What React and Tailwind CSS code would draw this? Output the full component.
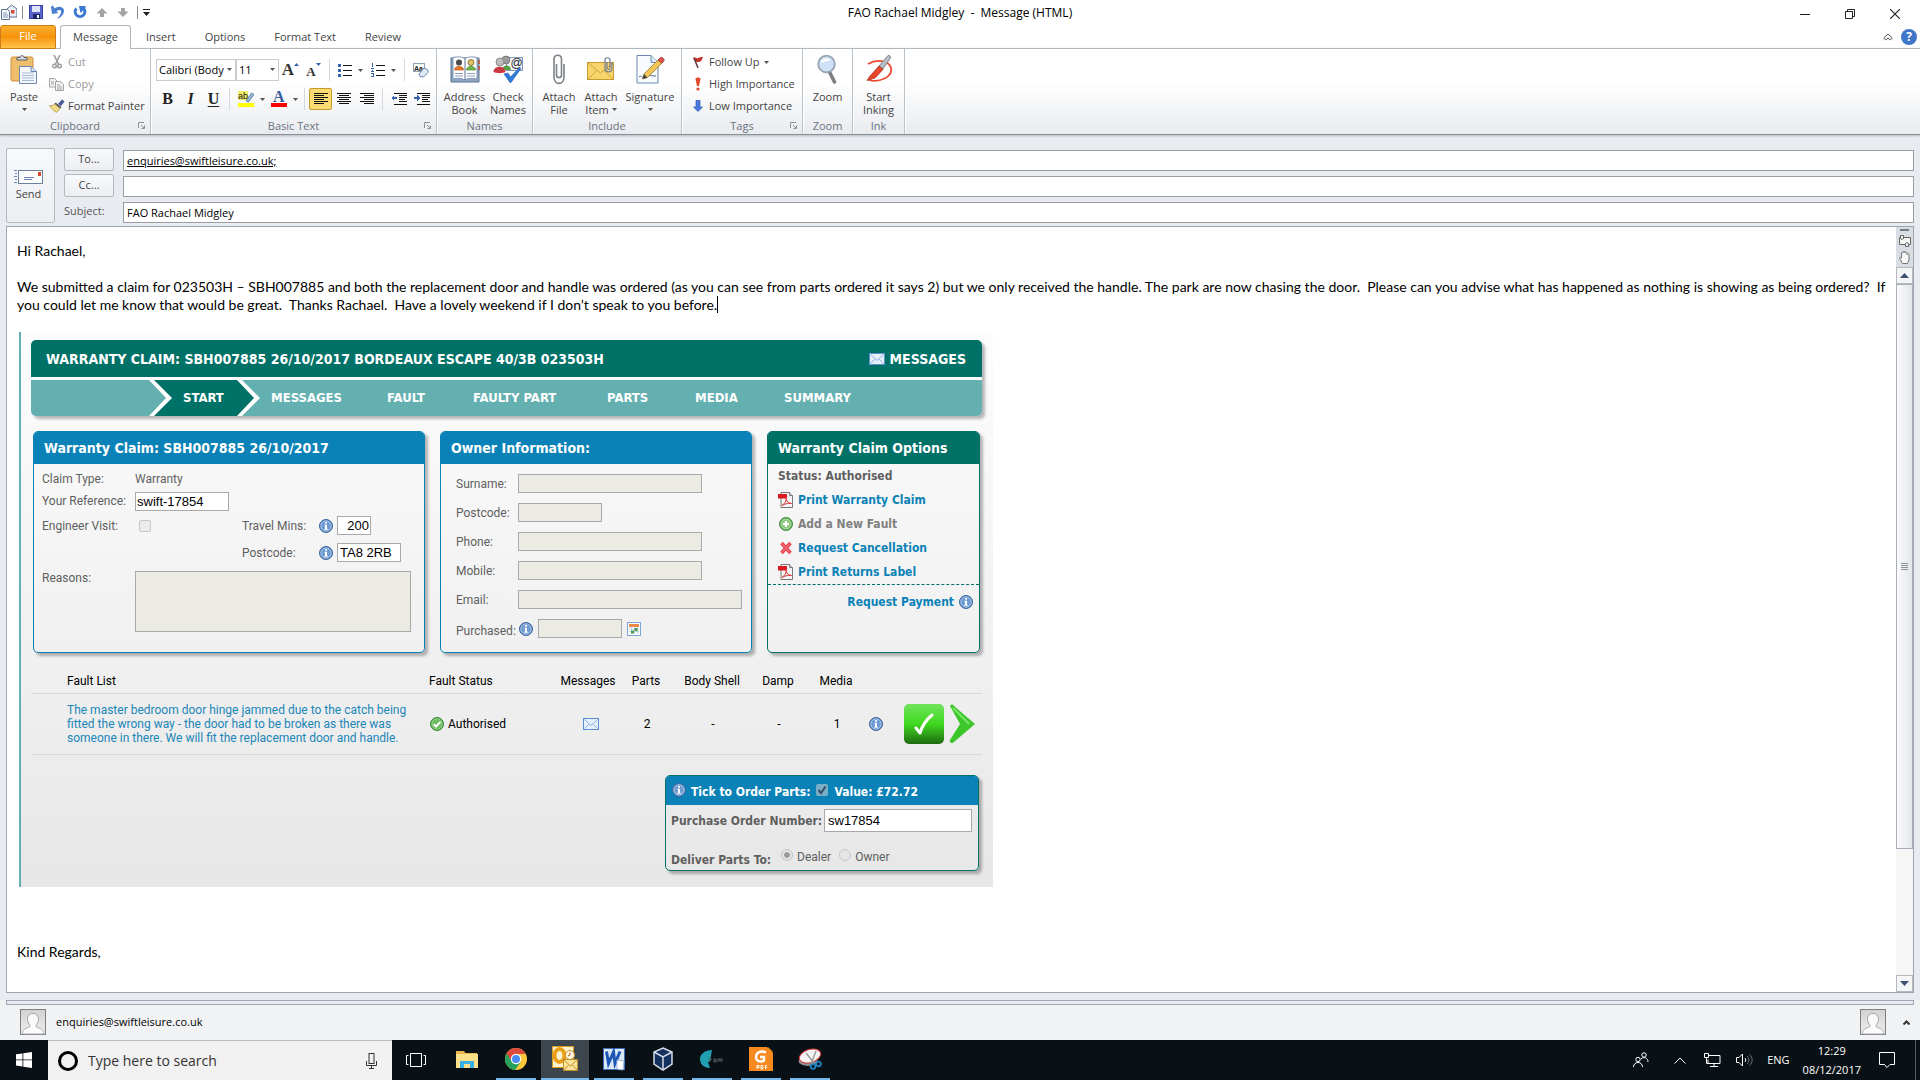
import React from 'react';

const TABS = ['Insert', 'Options', 'Format Text', 'Review'];

const CLAIM_TABS = [
  { label: 'MESSAGES', width: 'w-[116px]' },
  { label: 'FAULT', width: 'w-[86px]' },
  { label: 'FAULTY PART', width: 'w-[134px]' },
  { label: 'PARTS', width: 'w-[88px]' },
  { label: 'MEDIA', width: 'w-[89px]' },
  { label: 'SUMMARY', width: 'w-[90px]' },
];

const OWNER_FIELDS = [
  { id: 'surname', label: 'Surname:', width: 'w-[184px]' },
  { id: 'owner-postcode', label: 'Postcode:', width: 'w-[84px]' },
  { id: 'phone', label: 'Phone:', width: 'w-[184px]' },
  { id: 'mobile', label: 'Mobile:', width: 'w-[184px]' },
  { id: 'email', label: 'Email:', width: 'w-[224px]' },
];

/* ---------- small shared pieces ---------- */

const Caret = ({ className = 'fill-[#555]' }) => (
  <svg width="5" height="3" viewBox="0 0 5 3" className={`shrink-0 ${className}`}>
    <path d="M0 0h5L2.5 3z" />
  </svg>
);

const Lines = ({ rows, children, width = 16 }) => (
  <svg width={width} height="14" viewBox={`0 0 ${width} 14`} shapeRendering="crispEdges">
    {rows.map(([x, y, w]) => (
      <rect key={y} x={x} y={y} width={w} height="1" fill="#111" />
    ))}
    {children}
  </svg>
);

const InfoIcon = () => (
  <svg width="14" height="14" viewBox="0 0 14 14" className="shrink-0">
    <circle cx="7" cy="7" r="6.5" fill="#4f7fbb" stroke="#3c66a0" />
    <circle cx="7" cy="7" r="5.2" fill="#6d9bd1" stroke="#c4d8ee" strokeWidth=".8" />
    <rect x="6.2" y="3" width="1.8" height="1.7" fill="#fff" />
    <path d="M5.4 5.8H8v4h.8v1H5.2v-1H6v-3h-.6z" fill="#fff" />
  </svg>
);

const EnvelopeIcon = () => (
  <svg width="16" height="12" viewBox="0 0 16 12" className="shrink-0">
    <rect x=".5" y=".5" width="15" height="11" fill="#e6f0fc" stroke="#5b8fd0" />
    <path d="M1.5 1.5 8 7.5l6.5-6M1.5 10.5l4.3-4.3M14.5 10.5l-4.3-4.3" fill="none" stroke="#8db4e4" />
  </svg>
);

const PdfIcon = () => (
  <svg width="16" height="16" viewBox="0 0 16 16" className="shrink-0">
    <path d="M3 .5h8.500l3 3v12H3z" fill="#f5f5f5" stroke="#777" />
    <path d="M11.500.5v3h3" fill="#ddd" stroke="#777" />
    <rect x="0" y="2" width="9" height="4.500" fill="#d8191f" />
    <path d="M4 13.500c3-2 4.300-4.500 4-7 .5 3 2.500 4.500 5.500 5-4-.3-7 .4-9.500 2z" fill="none" stroke="#d8373c" />
  </svg>
);

const AddIcon = () => (
  <svg width="14" height="14" viewBox="0 0 14 14" className="shrink-0">
    <circle cx="7" cy="7" r="6.5" fill="#5aa552" stroke="#4a9043" />
    <circle cx="7" cy="7" r="5" fill="#8bc97f" stroke="#c9e8c2" strokeWidth=".7" />
    <path d="M7 4v6M4 7h6" stroke="#fff" strokeWidth="2.2" />
  </svg>
);

const CrossIcon = () => (
  <svg width="14" height="14" viewBox="0 0 14 14" className="shrink-0">
    <path d="M2.5 2 11.5 12M11.5 2 2.5 12" stroke="#e0404a" strokeWidth="3.6" />
    <path d="M2.5 2 11.5 12M11.5 2 2.5 12" stroke="#f0656a" strokeWidth="1.8" />
  </svg>
);

const OkIcon = () => (
  <svg width="14" height="14" viewBox="0 0 14 14" className="shrink-0">
    <circle cx="7" cy="7" r="6.5" fill="#55a84c" stroke="#3f8a3a" />
    <circle cx="7" cy="7" r="5.2" fill="#6fbb62" stroke="#a9dba0" strokeWidth=".7" />
    <path d="m3.8 7.2 2.3 2.3 4.3-4.6" fill="none" stroke="#fff" strokeWidth="2" />
  </svg>
);

const CalendarIcon = () => (
  <svg width="14" height="14" viewBox="0 0 14 14" className="shrink-0">
    <rect x=".5" y=".5" width="13" height="13" fill="#fff" stroke="#7ba6dc" />
    <rect x="2" y="2" width="10" height="3" fill="#f08a4b" />
    <path d="M2 7h10M2 9.5h10M4.5 5v7M7.5 5v7M10.5 5v7" stroke="#a9c6ea" strokeWidth=".7" />
    <rect x="7.5" y="6" width="3" height="3" fill="#4e9c4b" />
    <rect x="4" y="8.5" width="3" height="3" fill="#4e9c4b" />
  </svg>
);

const PersonIcon = () => (
  <svg width="26" height="26" viewBox="0 0 26 26" className="shrink-0">
    <defs>
      <linearGradient id="person" x2="0" y2="1">
        <stop offset="0" stopColor="#d2d2d2" />
        <stop offset="1" stopColor="#efefef" />
      </linearGradient>
    </defs>
    <rect x=".5" y=".5" width="25" height="25" fill="url(#person)" stroke="#7d7f83" />
    <path
      d="M2.500 25c0-4 1-5 6-6.500 1.500-.5 1.800-2 .8-3.200C8 13.500 7.500 12 7.500 10c0-3.500 2-5.500 5.500-5.500s5.500 2 5.500 5.500c0 2-.5 3.500-1.800 5.300-1 1.200-.7 2.700.8 3.200 5 1.500 6 2.500 6 6.500z"
      fill="#fafafa"
      stroke="#a5a8ad"
    />
  </svg>
);

/* ---------- quick access toolbar ---------- */

function TitleBar() {
  return (
    <header className="relative flex h-6 items-center justify-between bg-white">
      <div className="flex items-center gap-[5px] pl-px">
        <svg width="16" height="16" viewBox="0 0 16 16">
          <path d="M5 6 10.500 1 16 5v8H5z" fill="#e8eef6" stroke="#5e7391" />
          <rect x="10" y="6" width="3.500" height="3.500" fill="#d2503b" />
          <path d="M.5 5.500h6l2 2v8h-8z" fill="#f6f9fd" stroke="#5e7391" />
          <path d="M2 9h4M2 11h5M2 13h5" stroke="#7d95b6" />
        </svg>
        <span className="h-[13px] w-px bg-[#8c8c8c]" />
        <button aria-label="Save" className="ml-px">
          <svg width="14" height="14" viewBox="0 0 14 14">
            <rect x=".5" y=".5" width="13" height="13" fill="#5a63c8" stroke="#3a449c" />
            <rect x="3" y="1" width="8" height="6" fill="#dfe5f8" />
            <rect x="4" y="9" width="7" height="5" fill="#20286c" />
            <rect x="8" y="10" width="2" height="3" fill="#fff" />
          </svg>
        </button>
        <button aria-label="Undo" className="ml-[3px]">
          <svg width="14" height="14" viewBox="0 0 14 14">
            <path d="M0 1.500 2 .5l1.500 3C6 1 12.500.5 13 5.500c.2 3.500-2.500 6-5.500 8l-1-.5c2.500-2.500 4-5 3.500-7-.5-1.500-3-1-4.500.5L7.500 8 1 9z" fill="#4a7fd0" />
          </svg>
        </button>
        <button aria-label="Redo" className="ml-[3px]">
          <svg width="14" height="14" viewBox="0 0 14 14">
            <path d="M3.500 3.500a4.800 4.800 0 1 0 7 0" fill="none" stroke="#3a78d2" strokeWidth="3" />
            <path d="M6 1h6.500v2L7.500 8z" fill="#3a78d2" />
          </svg>
        </button>
        <button aria-label="Previous item" className="ml-1">
          <svg width="12" height="11" viewBox="0 0 12 11"><path d="M6 1 11.500 6.500H8V10H4V6.500H.5z" fill="#a3a3a3" /></svg>
        </button>
        <button aria-label="Next item" className="ml-1">
          <svg width="12" height="11" viewBox="0 0 12 11"><path d="M6 10 .5 4.500H4V1h4v3.500h3.500z" fill="#a3a3a3" /></svg>
        </button>
        <span className="ml-[3px] h-[13px] w-px bg-[#8c8c8c]" />
        <button aria-label="Customise toolbar">
          <svg width="7" height="7" viewBox="0 0 7 7"><path d="M0 0h7v1H0zM0 3h7L3.500 7z" fill="#222" /></svg>
        </button>
      </div>
      <h1 className="pointer-events-none absolute inset-x-0 pt-[2px] text-center text-[12px] text-black">
        FAO Rachael Midgley&nbsp; -&nbsp; Message (HTML)
      </h1>
      <div className="flex items-center gap-[35px] pr-5 pt-1">
        <button aria-label="Minimise"><svg width="10" height="10"><path d="M0 5.500h10" stroke="#222" /></svg></button>
        <button aria-label="Restore">
          <svg width="10" height="10" viewBox="0 0 10 10" fill="none" stroke="#222"><path d="M.5 2.500h7v7h-7zM2.500 2.500v-2h7v7h-2" /></svg>
        </button>
        <button aria-label="Close">
          <svg width="10" height="10" viewBox="0 0 10 10" stroke="#222" strokeWidth="1.2"><path d="M0 0l10 10M10 0 0 10" /></svg>
        </button>
      </div>
    </header>
  );
}

function TabRow() {
  return (
    <nav className="relative z-10 -mb-px mt-px flex h-6 items-stretch text-[11px] text-[#444]">
      <button className="w-14 rounded-t-[3px] border border-[#cf7a17] bg-linear-to-b from-[#f9b02a] via-[#f79306] to-[#ffc445] pb-px text-white">
        File
      </button>
      <button className="ml-1 w-[71px] rounded-t-[3px] border border-b-0 border-[#b0b6bd] bg-white">Message</button>
      <div className="flex gap-[29px] pl-[15px]">
        {TABS.map(tab => <button key={tab}>{tab}</button>)}
      </div>
      <div className="ml-auto flex items-center gap-2 pr-[3px]">
        <button aria-label="Minimise ribbon">
          <svg width="10" height="8" viewBox="0 0 10 8" fill="none" stroke="#555"><path d="m.7 5 4.300-4 4.300 4-2 2L5 5 2.700 7z" /></svg>
        </button>
        <button aria-label="Help" className="size-4 rounded-full bg-[#3f76c9] text-[12px] font-bold leading-4 text-white">?</button>
      </div>
    </nav>
  );
}

/* ---------- ribbon ---------- */

function Group({ title, width, launcher, children }) {
  return (
    <section className={`flex h-full flex-col border-r border-[#bcc2ca] shadow-[1px_0_0_#fff] ${width}`}>
      <div className="h-[68px]">{children}</div>
      <div className="relative text-center text-[11px] leading-[17px] text-[#6b7280]">
        {title}
        {launcher && (
          <button aria-label={`${title} options`} className="absolute right-[5px] top-[5px]">
            <svg width="7" height="7" viewBox="0 0 7 7" fill="none" stroke="#8b9097"><path d="M.5 6V.5H6M3 3l3 3M6.500 3.500v3h-3" /></svg>
          </button>
        )}
      </div>
    </section>
  );
}

function BigButton({ icon, width, label, second, caret }) {
  return (
    <button className={`flex flex-col items-center pt-1 text-[11px] leading-[13px] text-[#444] ${width}`}>
      <span className="mb-[5px] flex h-8 items-center justify-center">{icon}</span>
      <span>{label}</span>
      <span className="flex h-[13px] items-center gap-[3px]">
        {second}
        {caret && <Caret />}
      </span>
    </button>
  );
}

function SmallButton({ icon, label, muted, caret }) {
  return (
    <button className={`flex h-[22px] items-center whitespace-nowrap text-[11px] ${muted ? 'text-[#9a9a9a]' : 'text-[#444]'}`}>
      <span className="flex w-[17px] justify-center">{icon}</span>
      <span className="pl-[3px]">{label}</span>
      {caret && <span className="pl-1"><Caret /></span>}
    </button>
  );
}

const ToolButton = ({ label, active, children }) => (
  <button
    aria-label={label}
    className={`flex h-[22px] w-[23px] items-center justify-center ${active ? 'rounded-[2px] border border-[#c29b29] bg-[#fbdb72]' : ''}`}
  >
    {children}
  </button>
);

const SplitButton = ({ label, children }) => (
  <button aria-label={label} className="flex h-[22px] w-[33px] items-center gap-[6px] pl-1">
    {children}
    <Caret />
  </button>
);

const Divider = () => <span className="mx-1 h-[22px] w-px bg-[#d5d8dc]" />;

const RibbonSelect = ({ label, value, width }) => (
  <span className={`relative flex ${width}`}>
    <select
      aria-label={label}
      defaultValue={value}
      className="h-[22px] w-full appearance-none border border-[#c9ccd1] bg-white pl-[2px] text-[11px] text-black"
    >
      <option>{value}</option>
    </select>
    <span className="pointer-events-none absolute right-1 top-[9px] flex"><Caret /></span>
  </span>
);

const PasteIcon = () => (
  <svg width="28" height="31" viewBox="0 0 28 31">
    <rect x="1" y="3" width="22" height="24" rx="1.5" fill="#efbe6a" stroke="#c98f3a" />
    <path d="M7 6V3.500h3C10 1 14 1 14 3.500h3V6z" fill="#d9dce2" stroke="#555b66" />
    <path d="M9.500 12.500H21l5.500 5v12h-17z" fill="#f4f8fe" stroke="#6b86ad" />
    <path d="M21 12.500v5h5.500" fill="#d3e0f2" stroke="#6b86ad" />
    <path d="M12 19h12M12 21.500h12M12 24h12M12 26.500h12" stroke="#a4b7d3" />
  </svg>
);

const CutIcon = () => (
  <svg width="10" height="14" viewBox="0 0 10 14" fill="none" stroke="#9b9b9b">
    <path d="M2 0l4.500 9M8 0 3.500 9" strokeWidth="1.6" />
    <circle cx="2.5" cy="11" r="1.8" strokeWidth="1.4" />
    <circle cx="7.5" cy="11" r="1.8" strokeWidth="1.4" />
  </svg>
);

const CopyIcon = () => (
  <svg width="15" height="13" viewBox="0 0 15 13" fill="#f2f2f2" stroke="#a3a3a3">
    <path d="M.5.5h5l2.500 2.500v6H.5z" />
    <path d="M6.500 3.500h5l3 3v6h-8z" />
    <path d="M2 4h3M2 6h3M8 7h3M8 9h5M8 11h5" />
  </svg>
);

const PainterIcon = () => (
  <svg width="16" height="14" viewBox="0 0 16 14">
    <path d="m9 5 4-4.500 2.500 2L12 7z" fill="#46559b" />
    <path d="m6.500 3.500 6 4.500-1.500 1.500L5.500 5z" fill="#555" />
    <path d="M5.500 5 11 9.500 7.500 13.500C5 12 2.500 10 .5 6.500 2.500 7 4 6.500 5.500 5z" fill="#f1dc8a" stroke="#a98e3c" strokeWidth=".7" />
  </svg>
);

const AddressBookIcon = () => (
  <svg width="30" height="27" viewBox="0 0 30 27">
    <path d="M1 2h28v24H1z" fill="#8fa6c4" stroke="#59718f" />
    <path d="M3 1.500c4-1 9-1 12 1 3-2 8-2 12-1V23c-4-1-9-1-12 1-3-2-8-2-12-1z" fill="#fff" stroke="#8297b5" />
    <path d="M15 2.500V24" stroke="#59718f" />
    <circle cx="9" cy="6.500" r="3" fill="#4a4a4a" />
    <path d="M4.500 14c0-5 9-5 9 0z" fill="#e6762a" stroke="#b2500f" strokeWidth=".6" />
    <circle cx="21" cy="6.500" r="3" fill="#e3c265" stroke="#5c4a1a" strokeWidth=".7" />
    <path d="M16.500 14c0-5 9-5 9 0z" fill="#6fb64c" stroke="#3f8224" strokeWidth=".6" />
    <path d="M5 17.500h8M5 20h8M17 17.500h8M17 20h8" stroke="#8aa0bf" />
    <path d="M29 4v4M29 10v4" stroke="#c84a32" strokeWidth="1.5" />
  </svg>
);

const CheckNamesIcon = () => (
  <svg width="31" height="28" viewBox="0 0 31 28">
    <rect x="13.500" y="2.500" width="16" height="13" fill="#f4f8fd" stroke="#7f98ba" />
    <circle cx="13" cy="5" r="4" fill="#9b9b9b" stroke="#666" strokeWidth=".7" />
    <path d="M9 15c0-6 9-6 9 0z" fill="#55a043" />
    <circle cx="7" cy="7" r="4" fill="#bdbdbd" stroke="#707070" strokeWidth=".7" />
    <path d="M.5 17c0-7 12-7 12 0-3 1.500-9 1.500-12 0z" fill="#c93a44" />
    <text x="17.500" y="12" fontSize="12" fontFamily="Liberation Sans" fill="#222">@</text>
    <path d="m11 19 4-1 2.500 4L26 13l2 .5-10 14h-1z" fill="#2f7bdc" stroke="#1c58ac" strokeWidth=".6" />
  </svg>
);

const ClipIcon = () => (
  <svg width="12" height="31" viewBox="0 0 12 31" fill="none" stroke="#7d8288" strokeWidth="1.6">
    <path d="M3.500 10v11c0 3.500 5 3.500 5 0V5c0-5-7.500-5-7.500 0v18c0 8.500 10 8.500 10 0V10" />
  </svg>
);

const AttachItemIcon = () => (
  <svg width="29" height="26" viewBox="0 0 29 26">
    <rect x=".5" y="6.500" width="26" height="17" fill="#f8d56a" stroke="#c79a32" />
    <path d="m1 7 12.500 10L26 7M1 23l9-8.500M26 23l-9-8.500" fill="none" stroke="#d0a440" />
    <path d="M20 6v6c0 2 3 2 3 0V4c0-3-5-3-5 0v8.500c0 4.500 7 4.500 7 0V6" fill="none" stroke="#6d7f99" strokeWidth="1.2" />
  </svg>
);

const SignatureIcon = () => (
  <svg width="29" height="30" viewBox="0 0 29 30">
    <path d="M1 1.500h14l7 7V29H1z" fill="#f8fbff" stroke="#6b86ad" />
    <path d="M15 1.500v7h7" fill="#dbe7f7" stroke="#6b86ad" />
    <path d="M3 23c3-3 3 3 6 0s4-1 11-1" fill="none" stroke="#54698c" />
    <path d="m8 20 15-15 3.500 3.500-15 15L6.500 25z" fill="#f3c655" stroke="#9a7a2a" strokeWidth=".8" />
    <path d="m22 6 2.500-2.500c1.500-1 4.500 2 3.500 3.500L25.500 9.500z" fill="#d9534f" stroke="#8b3a36" strokeWidth=".7" />
    <path d="m8 20-1.500 5 5-1.500z" fill="#444" />
  </svg>
);

const ZoomIcon = () => (
  <svg width="21" height="31" viewBox="0 0 21 31">
    <path d="m12 17 5.500 11" stroke="#7f7f7f" strokeWidth="3.6" strokeLinecap="round" />
    <circle cx="9.500" cy="10" r="8.300" fill="#cfe1f6" stroke="#98a3b1" strokeWidth="1.8" />
    <path d="M4 9c0-5 8-6 10-2-4-1-6 1-10 2z" fill="#fff" />
  </svg>
);

const InkIcon = () => (
  <svg width="28" height="30" viewBox="0 0 28 30">
    <path d="M3 10c8-5 21-4 23 4 2 9-12 15-22 12" fill="none" stroke="#ef4b32" strokeWidth="1.8" />
    <path d="M14 12 23 1.500c1.500-.5 3 1 2.500 2.500L18 15z" fill="#b9bcc1" stroke="#6f7276" strokeWidth=".8" />
    <path d="m14 12 4 3.500-8 8.500-6 2-2 .5 3-4.500z" fill="#e8432b" stroke="#a32a17" strokeWidth=".7" />
  </svg>
);

const INDENT_ROWS = [[3, 1, 13], [8, 3, 8], [8, 5, 8], [8, 7, 6], [8, 9, 8], [3, 12, 13]];

function Ribbon() {
  return (
    <div className="flex h-[87px] shrink-0 border-y border-t-[#b0b6bd] border-b-[#8b9097] bg-linear-to-b from-white from-40% to-[#e9ebef] shadow-[0_1px_2px_#b5bac2]">
      <Group title="Clipboard" width="w-[151px]" launcher>
        <div className="flex">
          <BigButton icon={<PasteIcon />} width="w-12" label="Paste" caret />
          <div className="flex flex-col items-start pt-[2px]">
            <SmallButton icon={<CutIcon />} label="Cut" muted />
            <SmallButton icon={<CopyIcon />} label="Copy" muted />
            <SmallButton icon={<PainterIcon />} label="Format Painter" />
          </div>
        </div>
      </Group>

      <Group title="Basic Text" width="w-[286px]" launcher>
        <div className="flex flex-col gap-[7px] pl-[5px] pt-[10px]">
          <div className="flex h-[22px] items-center">
            <RibbonSelect label="Font" value="Calibri (Body" width="w-20" />
            <RibbonSelect label="Font size" value="11" width="w-[43px]" />
            <ToolButton label="Grow font">
              <span className="font-['Liberation_Serif'] text-[17px] font-bold text-[#333]">A</span>
              <svg width="5" height="3" className="mb-3"><path d="M0 3h5L2.500 0z" fill="#3763ae" /></svg>
            </ToolButton>
            <ToolButton label="Shrink font">
              <span className="pt-1 font-['Liberation_Serif'] text-[13px] font-bold text-[#333]">A</span>
              <Caret className="mb-3 fill-[#3763ae]" />
            </ToolButton>
            <Divider />
            <SplitButton label="Bullets">
              <Lines rows={[[5, 2, 9], [5, 7, 9], [5, 12, 9]]} width={14}>
                <path d="M0 1h3v3H0zM0 6h3v3H0zM0 11h3v3H0z" fill="#3763ae" />
              </Lines>
            </SplitButton>
            <SplitButton label="Numbering">
              <Lines rows={[[5, 2, 9], [5, 7, 9], [5, 12, 9]]} width={14}>
                <path d="M1 0h1v4H1zM0 5h3v1H0zM1 7h1v1H1zM0 8h3v1H0zM0 10h3v1H0zM2 11h1v3H0v-1h2z" fill="#3763ae" />
              </Lines>
            </SplitButton>
            <Divider />
            <ToolButton label="Clear formatting">
              <svg width="16" height="16" viewBox="0 0 16 16">
                <rect x=".5" y="1.500" width="11" height="8" fill="#fff" stroke="#8da0ba" />
                <text x="1" y="8.500" fontSize="7" fontFamily="Liberation Sans" fontWeight="bold" fill="#222">Aa</text>
                <path d="m6 12 5-6 4 2v2.500L10.500 15 7 14.500z" fill="#dfe8f6" stroke="#7388ae" />
              </svg>
            </ToolButton>
          </div>

          <div className="flex h-[22px] items-center font-['Liberation_Serif'] text-[16px] text-[#222]">
            <ToolButton label="Bold"><b>B</b></ToolButton>
            <ToolButton label="Italic"><i className="font-bold">I</i></ToolButton>
            <ToolButton label="Underline"><b className="underline underline-offset-2">U</b></ToolButton>
            <Divider />
            <SplitButton label="Highlight colour">
              <svg width="16" height="16" viewBox="0 0 16 16">
                <rect width="10" height="9" fill="#f3ee6a" />
                <text x="0" y="8" fontSize="9" fontFamily="Liberation Sans" fill="#111">ab</text>
                <path d="m8 10 5.500-8L16 3.500 10.500 11z" fill="#9ab4da" stroke="#4b658f" strokeWidth=".7" />
                <rect y="12" width="16" height="4" fill="#ff0" />
              </svg>
            </SplitButton>
            <SplitButton label="Font colour">
              <svg width="16" height="16" viewBox="0 0 16 16">
                <text x="2" y="11" fontSize="16" fontFamily="Liberation Serif" fontWeight="bold" fill="#3a5c9c">A</text>
                <rect y="12" width="16" height="4" fill="#f00" />
              </svg>
            </SplitButton>
            <Divider />
            <ToolButton label="Align left" active>
              <Lines rows={[[0, 1, 14], [0, 3, 10], [0, 5, 14], [0, 7, 10], [0, 9, 14], [0, 11, 10]]} width={14} />
            </ToolButton>
            <ToolButton label="Centre">
              <Lines rows={[[0, 1, 14], [2, 3, 10], [0, 5, 14], [2, 7, 10], [0, 9, 14], [2, 11, 10]]} width={14} />
            </ToolButton>
            <ToolButton label="Align right">
              <Lines rows={[[0, 1, 14], [4, 3, 10], [0, 5, 14], [4, 7, 10], [0, 9, 14], [4, 11, 10]]} width={14} />
            </ToolButton>
            <Divider />
            <ToolButton label="Decrease indent">
              <Lines rows={INDENT_ROWS}><path d="M0 6l3-3v2h3v2H3v2z" fill="#3763ae" /></Lines>
            </ToolButton>
            <ToolButton label="Increase indent">
              <Lines rows={INDENT_ROWS}><path d="M6 6 3 3v2H0v2h3v2z" fill="#3763ae" /></Lines>
            </ToolButton>
          </div>
        </div>
      </Group>

      <Group title="Names" width="w-24">
        <div className="flex pl-[5px]">
          <BigButton icon={<AddressBookIcon />} width="w-[45px]" label="Address" second="Book" />
          <BigButton icon={<CheckNamesIcon />} width="w-[42px]" label="Check" second="Names" />
        </div>
      </Group>

      <Group title="Include" width="w-[149px]">
        <div className="flex pl-[6px]">
          <BigButton icon={<ClipIcon />} width="w-10" label="Attach" second="File" />
          <BigButton icon={<AttachItemIcon />} width="w-[44px]" label="Attach" second="Item" caret />
          <BigButton icon={<SignatureIcon />} width="w-[54px]" label="Signature" caret />
        </div>
      </Group>

      <Group title="Tags" width="w-[121px]" launcher>
        <div className="flex flex-col items-start pl-[7px] pt-[2px]">
          <SmallButton
            label="Follow Up"
            caret
            icon={<svg width="10" height="12" viewBox="0 0 10 12"><path d="M0 2c2-2 3 1 5 0s3-1 5-1c-1 3-2 5-5 5H3z" fill="#c5352b" /><path d="m1 2 4 10" stroke="#5b3b3b" strokeWidth="1.5" /></svg>}
          />
          <SmallButton
            label="High Importance"
            icon={<svg width="6" height="14" viewBox="0 0 6 14"><path d="M.5 2C.5 0 5.500 0 5.500 2L4 9H2z" fill="#e04a2a" /><circle cx="3" cy="12" r="1.6" fill="#e04a2a" /></svg>}
          />
          <SmallButton
            label="Low Importance"
            icon={<svg width="10" height="12" viewBox="0 0 10 12"><path d="M3 .5h4V7h2.500L5 11.500.5 7H3z" fill="#4a7ae0" stroke="#3058b0" strokeWidth=".7" /></svg>}
          />
        </div>
      </Group>

      <Group title="Zoom" width="w-[50px]">
        <BigButton icon={<ZoomIcon />} width="w-full" label="Zoom" />
      </Group>
      <Group title="Ink" width="w-[52px]">
        <BigButton icon={<InkIcon />} width="w-full" label="Start" second="Inking" />
      </Group>
    </div>
  );
}

/* ---------- message header ---------- */

const headerButton = 'border border-[#b4b8bf] rounded-[2px] bg-linear-to-b from-[#f8f9fb] to-[#eceef2] text-[11px] text-[#444]';
const headerInput = 'h-[21px] min-w-0 flex-1 self-end border border-[#9a9da2] bg-white px-[3px] pb-px text-[11px] text-black outline-none';

function MessageHeader() {
  return (
    <div className="flex shrink-0 gap-[9px] px-[6px] pt-[13px]">
      <button className={`flex w-[49px] flex-col items-center justify-center gap-px pr-1 pt-[2px] ${headerButton}`}>
        <svg width="30" height="15" viewBox="0 0 30 15">
          <path d="M0 .5h3M1 3.500h2M0 6.500h3M1 9.500h2M0 12.500h3" stroke="#6c86b5" />
          <rect x="4.500" y=".5" width="24" height="13" fill="#fbfcfe" stroke="#6b7f9e" />
          <rect x="24" y="2" width="3" height="4" fill="#d2452e" />
          <path d="M10 7.500h10M10 9.500h8" stroke="#6c86b5" />
        </svg>
        Send
      </button>
      <div className="flex flex-1 flex-col gap-[3px]">
        <div className="flex h-[23px] gap-[9px]">
          <button className={`w-[50px] ${headerButton}`}>To...</button>
          <input aria-label="To" className={`underline ${headerInput}`} defaultValue="enquiries@swiftleisure.co.uk;" />
        </div>
        <div className="flex h-[23px] gap-[9px]">
          <button className={`w-[50px] ${headerButton}`}>Cc...</button>
          <input aria-label="Cc" className={headerInput} />
        </div>
        <div className="flex h-[23px] gap-[9px]">
          <label htmlFor="subject" className="w-[50px] self-center text-[11px] text-[#555]">Subject:</label>
          <input id="subject" className={headerInput} defaultValue="FAO Rachael Midgley" />
        </div>
      </div>
    </div>
  );
}

/* ---------- warranty claim page ---------- */

const field = 'border border-[#a9a9a9] font-[Liberation_Sans] text-[13px] text-black h-[19px]';
const boldFont = "font-['DejaVu_Sans_Condensed','DejaVu_Sans',sans-serif] font-bold";

function Panel({ title, tone, children }) {
  const blue = tone === 'blue';
  return (
    <section className={`overflow-hidden rounded-[5px] border shadow-[3px_3px_3px_rgba(0,0,0,0.28)] ${blue ? 'border-[#0b82b7]' : 'border-[#007167]'}`}>
      <h3 className={`h-8 pl-[10px] text-[14px] leading-8 text-white ${boldFont} ${blue ? 'bg-[#0b82b7]' : 'bg-[#007167]'}`}>{title}</h3>
      {children}
    </section>
  );
}

function ClaimPanel() {
  return (
    <Panel title="Warranty Claim: SBH007885 26/10/2017" tone="blue">
      <div className="pl-2 pt-1">
        <div className="flex h-[22px] items-center">
          <span className="w-[93px]">Claim Type:</span>
          <span>Warranty</span>
        </div>
        <div className="flex h-[22px] items-center">
          <label htmlFor="reference" className="w-[93px]">Your Reference:</label>
          <input id="reference" defaultValue="swift-17854" className={`w-[94px] bg-white px-px ${field}`} />
        </div>
        <div className="flex h-[27px] items-center">
          <label htmlFor="engineer" className="w-[93px]">Engineer Visit:</label>
          <span className="flex w-[107px] pl-1">
            <input id="engineer" type="checkbox" disabled className="size-3 appearance-none rounded-[2px] border border-[#c6c6c6] bg-[#ececec]" />
          </span>
          <label htmlFor="travel" className="w-[77px]">Travel Mins:</label>
          <InfoIcon />
          <input id="travel" defaultValue="200" className={`ml-1 w-[34px] bg-white px-px text-right ${field}`} />
        </div>
        <div className="flex h-[27px] items-center pl-[200px]">
          <label htmlFor="claim-postcode" className="w-[77px]">Postcode:</label>
          <InfoIcon />
          <input id="claim-postcode" defaultValue="TA8 2RB" className={`ml-1 w-16 bg-white px-[2px] ${field}`} />
        </div>
        <div className="flex pt-[5px]">
          <label htmlFor="reasons" className="w-[93px]">Reasons:</label>
          <textarea id="reasons" disabled className="h-[61px] w-[276px] resize-none border border-[#a9a9a9] bg-[#ebebe4]" />
        </div>
      </div>
    </Panel>
  );
}

function OwnerPanel() {
  return (
    <Panel title="Owner Information:" tone="blue">
      <div className="pb-[9px] pl-[15px] pt-[5px]">
        {OWNER_FIELDS.map(({ id, label, width }) => (
          <div key={id} className="flex h-[29px] items-center">
            <label htmlFor={id} className="w-[62px]">{label}</label>
            <input id={id} disabled className={`${width} bg-[#ebebe4] ${field}`} />
          </div>
        ))}
        <div className="flex h-[29px] items-center">
          <label htmlFor="purchased" className="w-[62px] whitespace-nowrap pt-1">Purchased:</label>
          <span className="ml-px"><InfoIcon /></span>
          <input id="purchased" disabled className={`ml-[5px] mr-[5px] w-[84px] bg-[#ebebe4] ${field}`} />
          <CalendarIcon />
        </div>
      </div>
    </Panel>
  );
}

const OptionLink = ({ icon, label, muted }) => (
  <a href="#" className={`flex h-6 items-center gap-1 pl-[10px] ${boldFont} ${muted ? 'text-[#808080]' : 'text-[#0b82b7]'}`}>
    <span className="flex w-4 justify-center">{icon}</span>
    {label}
  </a>
);

function OptionsPanel() {
  return (
    <Panel title="Warranty Claim Options" tone="green">
      <p className={`h-6 pl-[10px] leading-6 ${boldFont}`}>Status: Authorised</p>
      <OptionLink icon={<PdfIcon />} label="Print Warranty Claim" />
      <OptionLink icon={<AddIcon />} label="Add a New Fault" muted />
      <OptionLink icon={<CrossIcon />} label="Request Cancellation" />
      <OptionLink icon={<PdfIcon />} label="Print Returns Label" />
      <div className="flex items-center justify-end gap-[5px] border-t border-dashed border-[#007167] pr-[6px] pt-[10px]">
        <a href="#" className={`text-[#0b82b7] ${boldFont}`}>Request Payment</a>
        <InfoIcon />
      </div>
    </Panel>
  );
}

function FaultTable() {
  return (
    <table className="mt-[15px] w-full table-fixed border-collapse text-black">
      <colgroup>
        <col />
        <col className="w-[126px]" />
        <col className="w-[66px]" />
        <col className="w-[50px]" />
        <col className="w-[82px]" />
        <col className="w-[50px]" />
        <col className="w-[66px]" />
        <col className="w-[113px]" />
      </colgroup>
      <thead>
        <tr className="h-[25px] border-b border-[#d9d9d9] [&>th]:whitespace-nowrap [&>th]:pt-[2px] [&>th]:font-normal">
          <th className="pl-9 text-left">Fault List</th>
          <th className="text-left">Fault Status</th>
          <th>Messages</th>
          <th>Parts</th>
          <th>Body Shell</th>
          <th>Damp</th>
          <th>Media</th>
          <th aria-label="Actions" />
        </tr>
      </thead>
      <tbody>
        <tr className="h-[61px] border-b border-[#d9d9d9] text-center">
          <td className="pl-9 text-left">
            <a href="#" className="block leading-[14px] text-[#1b86b8]">
              The master bedroom door hinge jammed due to the catch being<br />
              fitted the wrong way - the door had to be broken as there was<br />
              someone in there. We will fit the replacement door and handle.
            </a>
          </td>
          <td>
            <span className="flex items-center gap-1 pl-px"><OkIcon />Authorised</span>
          </td>
          <td><span className="flex justify-center pl-[6px]"><EnvelopeIcon /></span></td>
          <td className="pl-[2px]">2</td>
          <td className="pl-[2px]">-</td>
          <td className="pl-[2px]">-</td>
          <td className="pl-[2px]">1</td>
          <td>
            <span className="flex items-center">
              <InfoIcon />
              <svg width="40" height="40" viewBox="0 0 40 40" className="ml-[21px] shrink-0">
                <defs>
                  <linearGradient id="tick" x2="0" y2="1">
                    <stop offset="0" stopColor="#6fe35b" />
                    <stop offset=".5" stopColor="#3fd820" />
                    <stop offset="1" stopColor="#1d6a10" />
                  </linearGradient>
                </defs>
                <rect width="40" height="40" rx="5" fill="url(#tick)" />
                <path d="m12 24 4 5c2-7 6-13 12-18" fill="none" stroke="#fff" strokeWidth="3" strokeLinecap="round" strokeLinejoin="round" />
              </svg>
              <svg width="27" height="40" viewBox="0 0 27 40" className="ml-[5px] shrink-0">
                <path d="M1 2c1-2 3-2 4 0l21 18L5 38c-2 2-5 1-4-2l10-16z" fill="#3dc62a" />
                <path d="m4 4 16 16" stroke="#7be56b" strokeWidth="2" />
              </svg>
            </span>
          </td>
        </tr>
      </tbody>
    </table>
  );
}

function OrderPanel() {
  return (
    <section className={`ml-auto mr-[3px] mt-5 w-[314px] overflow-hidden rounded-[5px] border border-[#007167] shadow-[3px_3px_3px_rgba(0,0,0,0.28)] ${boldFont}`}>
      <div className="flex h-[29px] items-center bg-[#0b82b7] pl-[6px] pt-1 text-white">
        <span className="pb-1"><InfoIcon /></span>
        <label htmlFor="order" className="pl-[5px]">Tick to Order Parts:</label>
        <span className="relative mx-[6px] mb-1 size-3">
          <input id="order" type="checkbox" disabled defaultChecked className="block size-3 appearance-none rounded-[2px] bg-[#79aec8]" />
          <svg viewBox="0 0 12 12" className="pointer-events-none absolute inset-0"><path d="m2.500 6 2.500 3L9.500 2.500" fill="none" stroke="#33505e" strokeWidth="2" /></svg>
        </span>
        <span>Value: £72.72</span>
      </div>
      <div className="flex h-8 items-center justify-between pl-[5px] pr-[6px]">
        <label htmlFor="po-number">Purchase Order Number:</label>
        <input id="po-number" defaultValue="sw17854" className="h-[23px] w-[148px] border border-[#a9a9a9] bg-white px-[3px] font-[Liberation_Sans] text-[13px] font-normal text-black" />
      </div>
      <fieldset className="flex h-[33px] items-end pb-[3px] pl-[5px]">
        <span className="w-[110px]">Deliver Parts To:</span>
        <span className="flex items-center gap-1 pb-[2px] font-[Roboto] font-normal">
          <input id="dealer" type="radio" name="deliver" disabled defaultChecked className="mb-1 size-3 appearance-none rounded-full border border-[#c2c2c2] bg-[radial-gradient(#9a9a9a_35%,#e4e4e4_45%)]" />
          <label htmlFor="dealer">Dealer</label>
          <input id="owner" type="radio" name="deliver" disabled className="mb-1 ml-1 size-3 appearance-none rounded-full border border-[#c8c8c8] bg-[#e6e6e6]" />
          <label htmlFor="owner">Owner</label>
        </span>
      </fieldset>
    </section>
  );
}

function WarrantyClaim() {
  return (
    <div className="ml-[2px] w-full max-w-[974px] border-l-2 border-[#64b0b1] bg-linear-to-b from-[#fdfdfd] to-[#e7e7e7] pb-4 pl-[10px] pr-[11px] pt-2 font-[Roboto,sans-serif] text-[12px] leading-[14px] text-[#5f5f5f]">
      <div className={`overflow-hidden rounded-[5px] text-white shadow-[3px_3px_3px_rgba(0,0,0,0.28)] ${boldFont}`}>
        <div className="flex h-[37px] items-center justify-between bg-[#007167] pl-[15px] pr-4 text-[14px]">
          <h2>WARRANTY CLAIM: SBH007885 26/10/2017 BORDEAUX ESCAPE 40/3B 023503H</h2>
          <a href="#" className="flex items-center gap-[5px]"><EnvelopeIcon />MESSAGES</a>
        </div>
        <nav className="flex h-[39px] border-t-[3px] border-white bg-[#64b0b1] pl-[118px] text-[13px] leading-[36px]">
          <svg width="23" height="36" viewBox="0 0 23 36">
            <path d="M3 0h20v36H3l18-18z" fill="#007167" />
            <path d="M0 0h5l18 18L5 36H0l17-18z" fill="#fff" />
          </svg>
          <a href="#" className="w-[65px] bg-[#007167] pl-[11px]">START</a>
          <svg width="23" height="36" viewBox="0 0 23 36">
            <path d="M0 0h3l17 18L3 36H0z" fill="#007167" />
            <path d="M0 0h5l18 18L5 36H0l17-18z" fill="#fff" />
          </svg>
          <div className="flex pl-[11px]">
            {CLAIM_TABS.map(({ label, width }) => (
              <a key={label} href="#" className={`whitespace-nowrap ${width}`}>{label}</a>
            ))}
          </div>
        </nav>
      </div>
      <div className="mt-[15px] grid grid-cols-[392fr_312fr_213fr] gap-[15px] px-[2px]">
        <ClaimPanel />
        <OwnerPanel />
        <OptionsPanel />
      </div>
      <FaultTable />
      <OrderPanel />
    </div>
  );
}

/* ---------- message body ---------- */

function ScrollBar() {
  const arrow = 'flex h-[17px] w-full items-center justify-center border border-[#b4b8bf] bg-[#f4f5f7]';
  return (
    <div className="flex w-[17px] shrink-0 flex-col bg-[#f6f6f7]">
      <div className="flex h-10 flex-col items-center gap-1 bg-[#d9dee5] pt-[2px]">
        <span className="h-[2px] w-[9px] bg-[#777c84]" />
        <svg width="12" height="12" viewBox="0 0 12 12" fill="#f4f4f4" stroke="#666"><path d="M.5 2.500h11v7H.5z" /><path d="M1.500.5h3v3l-1.500 1-1.500-1zM6.500 11.500h3v-3l-1.500-1-1.500 1z" /></svg>
        <svg width="12" height="13" viewBox="0 0 12 13" fill="#f7f7f7" stroke="#777"><path d="M3.500 12.500 1 8C0 6 1.500 6 2.500 7V2c0-1 1.500-1 1.500 0V1c0-1 2-1 2 0v1c0-1.500 2-1 2 0v1.500c0-1 2-1 2 0V9l-1.500 3.500z" /></svg>
      </div>
      <button aria-label="Scroll up" className={arrow}><svg width="9" height="5"><path d="M0 5h9L4.500 0z" fill="#3f4f73" /></svg></button>
      <div className="flex flex-[565] flex-col items-center justify-center gap-px border border-[#a9aeb8] bg-linear-to-r from-[#fbfbfc] to-[#e4e6ea]">
        {[0, 1, 2, 3].map(n => <span key={n} className="h-px w-[7px] bg-[#8b909b]" />)}
      </div>
      <div className="flex-[126]" />
      <button aria-label="Scroll down" className={arrow}><svg width="9" height="5"><path d="M0 0h9L4.500 5z" fill="#3f4f73" /></svg></button>
    </div>
  );
}

function MessageBody() {
  return (
    <main className="mx-[6px] mt-[3px] flex min-h-0 flex-1 border border-[#9ea5b3] bg-white">
      <div className="min-w-0 flex-1 overflow-hidden pl-[10px] pt-[15px] font-[Lato,sans-serif] text-[14px] leading-[18px] text-black">
        <p>Hi Rachael,</p>
        <p className="py-[18px]">
          We submitted a claim for 023503H – SBH007885 and both the replacement door and handle was ordered (as you can see from parts ordered it says 2) but we only received the handle. The park are now chasing the door.&nbsp; Please can you advise what has happened as nothing is showing as being ordered?&nbsp; If<br />
          you could let me know that would be great.&nbsp; Thanks Rachael.&nbsp; Have a lovely weekend if I don’t speak to you <span className="border-r border-black">before.</span>
        </p>
        <WarrantyClaim />
        <p className="pt-14">Kind Regards,</p>
      </div>
      <ScrollBar />
    </main>
  );
}

function PeoplePane() {
  return (
    <footer className="mt-[7px] shrink-0 bg-[#f1f2f4]">
      <div className="mx-[6px] h-[5px] border border-[#9ea5b3] bg-[#e8ebf0]" />
      <div className="flex h-[35px] items-center gap-[10px] pb-px pl-5 pr-[10px] text-[11px] text-black">
        <PersonIcon />
        <span>enquiries@swiftleisure.co.uk</span>
        <span className="ml-auto"><PersonIcon /></span>
        <button aria-label="Expand people pane" className="pl-[7px]">
          <svg width="7" height="5" viewBox="0 0 7 5" fill="none" stroke="#333" strokeWidth="2"><path d="m.5 4.500 3-3 3 3" /></svg>
        </button>
      </div>
    </footer>
  );
}

/* ---------- windows taskbar ---------- */

const ExplorerIcon = () => (
  <svg width="22" height="19" viewBox="0 0 22 19">
    <path d="M0 1h8l1.500 2H21v15H0z" fill="#e8b64c" />
    <path d="M0 4h22v14H0z" fill="#fde08a" />
    <path d="M4 18v-7h14v7h-4v-4H8v4z" fill="#38b0e6" />
  </svg>
);

const ChromeIcon = () => (
  <svg width="22" height="22" viewBox="0 0 22 22">
    <circle cx="11" cy="11" r="11" fill="#fdc83a" />
    <path d="M11 11 1.500 5.500A11 11 0 0 0 10 22l5.800-8.300z" fill="#25a15b" />
    <path d="M11 6h9.800A11 11 0 0 0 1.500 5.500L6.500 13z" fill="#dc4a3e" />
    <circle cx="11" cy="11" r="5.2" fill="#fff" />
    <circle cx="11" cy="11" r="4" fill="#4a8af4" />
  </svg>
);

const OutlookIcon = () => (
  <svg width="26" height="26" viewBox="0 0 26 26">
    <rect x=".5" y=".5" width="21" height="21" fill="#fdf3cf" stroke="#d79c1f" />
    <ellipse cx="7.500" cy="9.500" rx="5" ry="6.500" fill="none" stroke="#e9a11a" strokeWidth="4" />
    <circle cx="18" cy="9" r="4.5" fill="#fff7dc" stroke="#c9922a" />
    <path d="M18 6.500V9l-2 1" fill="none" stroke="#b0562a" />
    <rect x="11.500" y="13.500" width="14" height="11" fill="#fbe39a" stroke="#bd8f2c" />
    <path d="m12 14 6.500 6 6.500-6M12 24l4.500-5M25 24l-4.500-5" fill="none" stroke="#bd8f2c" />
  </svg>
);

const WordIcon = () => (
  <svg width="23" height="23" viewBox="0 0 23 23">
    <rect x=".5" y=".5" width="21" height="21" fill="#dbe8f8" stroke="#3f6fb8" />
    <path d="m3.500 3.500 2 12L10.500 4l1.500 11.500L17 3.500" fill="none" stroke="#1c55b5" strokeWidth="3" />
    <path d="m14 12 7 1-1 9-6-1z" fill="#fff" stroke="#9db6da" />
  </svg>
);

const VirtualBoxIcon = () => (
  <svg width="20" height="24" viewBox="0 0 20 24" stroke="#d4dce8" strokeWidth="1.5">
    <path d="m10 1 9 4v12l-9 6-9-6V5z" fill="#14305e" />
    <path d="m1 5 9 5 9-5M10 10v12" fill="none" />
  </svg>
);

const CdpIcon = () => (
  <svg width="24" height="18" viewBox="0 0 24 18">
    <path d="M12 0C5 0 0 4 0 9s4 9 10 9l-2-6 2-1z" fill="#1f9fb0" />
    <path d="M10 7v5M9 9h3M14 9h2v3h-2zM18 12V9h2v3M20 9h2v3" fill="none" stroke="#5b6367" />
  </svg>
);

const FoxitIcon = () => (
  <svg width="24" height="24" viewBox="0 0 24 24">
    <path d="M0 0h18l6 6v18H0z" fill="#f68a1f" />
    <path d="M19 0v5h5z" fill="#f68a1f" />
    <path d="M17 5.500c-5-2.500-10 0-10 4.500s5 5.500 8 3.500V10h-4" fill="none" stroke="#fff" strokeWidth="2.4" />
    <path d="M8 22v-3.500h2v2H8M12 18.500v3.500h1.500l.5-1v-2zM16.500 22v-3.500H18M16.500 20.500H18" fill="none" stroke="#fff" />
  </svg>
);

const SnipIcon = () => (
  <svg width="24" height="22" viewBox="0 0 24 22">
    <ellipse cx="10" cy="13" rx="9.5" ry="5" fill="#8f8f8f" />
    <ellipse cx="12" cy="8" rx="11" ry="6.5" transform="rotate(-18 12 8)" fill="#f4f4f4" stroke="#d03a3a" />
    <path d="m8 5 8 10M18 3l-5 13" stroke="#9a9a9a" strokeWidth="1.4" />
    <g fill="none" stroke="#2183c4" strokeWidth="1.8"><circle cx="15" cy="18.500" r="2.3" /><circle cx="20.500" cy="16" r="2.3" /></g>
  </svg>
);

const APPS = [
  { name: 'File Explorer', icon: <ExplorerIcon /> },
  { name: 'Chrome', icon: <ChromeIcon />, open: true },
  { name: 'Outlook', icon: <OutlookIcon />, open: true, active: true },
  { name: 'Word', icon: <WordIcon />, open: true },
  { name: 'VirtualBox', icon: <VirtualBoxIcon />, open: true },
  { name: 'CDP', icon: <CdpIcon />, open: true },
  { name: 'Foxit Reader', icon: <FoxitIcon />, open: true },
  { name: 'Snipping Tool', icon: <SnipIcon />, open: true },
];

function Taskbar() {
  return (
    <div className="flex h-10 shrink-0 items-stretch bg-[#0a1116] text-white">
      <button aria-label="Start" className="flex w-12 items-center justify-center">
        <svg width="16" height="16" viewBox="0 0 16 16" fill="#fff"><path d="M0 2.300 6.500 1.400v6.100H0zM7.300 1.300 16 0v7.500H7.300zM0 8.300h6.500v6.200L0 13.600zM7.300 8.300H16V16l-8.700-1.300z" /></svg>
      </button>
      <div className="flex w-[344px] items-center border-t border-[#b9bbbd] bg-[#f1f1f1] pl-[10px] pr-[15px]">
        <span className="size-5 shrink-0 rounded-full border-[3px] border-black" />
        <input aria-label="Search" placeholder="Type here to search" className="min-w-0 flex-1 bg-transparent pl-[10px] text-[14px] outline-none placeholder:text-[#333]" />
        <svg width="11" height="16" viewBox="0 0 11 16" fill="none" stroke="#333"><rect x="3" y=".5" width="5" height="10" /><path d="M.5 8v4.500h10V8M5.500 12.500v3M3 15.500h5" /></svg>
      </div>
      <button aria-label="Task view" className="flex w-[51px] items-center pl-[14px]">
        <svg width="20" height="14" viewBox="0 0 20 14" fill="none" stroke="#fff"><path d="M4.500.5h11v13h-11zM2.500 2.500h-2v9h2M17.500 2.500h2v9h-2" /></svg>
      </button>
      {APPS.map(({ name, icon, open, active }) => (
        <button
          key={name}
          aria-label={name}
          className={`mr-px flex w-12 flex-col items-center ${active ? 'bg-[#3c464c]' : ''}`}
        >
          <span className="flex flex-1 items-center">{icon}</span>
          <span className={`h-[2px] ${active ? 'w-full' : 'w-10'} ${open ? 'bg-[#76b9ed]' : ''}`} />
        </button>
      ))}
      <div className="ml-auto flex items-center pr-1 text-[11px]">
        <svg width="16" height="16" viewBox="0 0 16 16" fill="none" stroke="#fff" className="mr-[25px]">
          <circle cx="5" cy="7.500" r="2.2" /><path d="M.5 15c0-6 9-6 9 0" /><circle cx="11" cy="3" r="2.2" /><path d="M8 7c3-3 7-1 7 3" />
        </svg>
        <svg width="12" height="7" viewBox="0 0 12 7" fill="none" stroke="#fff" className="mr-[18px]"><path d="m.5 6.500 5.500-5.500 5.500 5.500" /></svg>
        <svg width="17" height="14" viewBox="0 0 17 14" fill="none" stroke="#fff" className="mr-[15px]"><path d="M5 2.500h11v8H4v-4M.5.500h4v4h-4zM2.500 4.500v6h2M10 10.500v3M6 13.500h8" /></svg>
        <svg width="17" height="14" viewBox="0 0 17 14" fill="none" stroke="#fff" className="mr-[14px]">
          <path d="M.5 4.500H3l3.500-3.500v12L3 9.500H.5zM9 5c1 1 1 3 0 4" /><path d="M11 3c2.500 2 2.500 6 0 8M13.500 1.500c3.500 3 3.500 8 0 11" stroke="#777" />
        </svg>
        <span>ENG</span>
        <div className="ml-[13px] mr-[18px] text-center leading-[19px]">
          <div>12:29</div>
          <div>08/12/2017</div>
        </div>
        <svg width="16" height="16" viewBox="0 0 16 16" fill="none" stroke="#fff" className="mr-5"><path d="M.5.500h15v12H11L8 15.500 5.500 12.500h-5z" /></svg>
        <span className="h-10 w-px bg-[#555c60]" />
      </div>
    </div>
  );
}

export default function App() {
  return (
    <div className="flex h-screen flex-col overflow-hidden bg-[#e8ebf0] font-['Open_Sans',sans-serif]">
      <div className="shrink-0 bg-white">
        <TitleBar />
        <TabRow />
      </div>
      <Ribbon />
      <MessageHeader />
      <MessageBody />
      <PeoplePane />
      <Taskbar />
    </div>
  );
}
